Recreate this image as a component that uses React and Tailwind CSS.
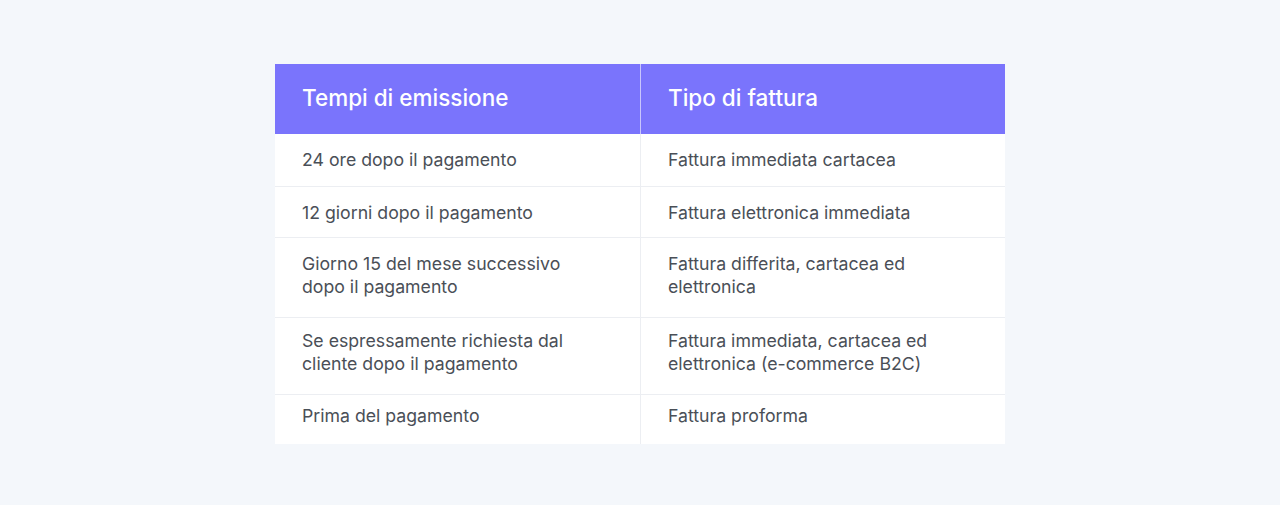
const rows = [
  { when: '24 ore dopo il pagamento', type: 'Fattura immediata cartacea', pad: 'pt-[14px] pb-[15px]' },
  { when: '12 giorni dopo il pagamento', type: 'Fattura elettronica immediata', pad: 'pt-[14px] pb-[13px]' },
  {
    when: 'Giorno 15 del mese successivo dopo il pagamento',
    type: 'Fattura differita, cartacea ed elettronica',
    pad: 'pt-[14px] pb-[19px]',
  },
  {
    when: 'Se espressamente richiesta dal cliente dopo il pagamento',
    type: 'Fattura immediata, cartacea ed elettronica (e-commerce B2C)',
    pad: 'pt-[11px] pb-[19px]',
  },
  { when: 'Prima del pagamento', type: 'Fattura proforma', pad: 'pt-[9px] pb-[17px]' },
];

export default function App() {
  return (
    <div className="w-full h-[505px] bg-[#f4f7fb] pt-16 font-['Inter',sans-serif]">
      <div className="mx-auto w-[730px] bg-white">
        {/* Header */}
        <div className="grid grid-cols-[366px_1fr] bg-[#7a74fc] text-white text-[22.5px] font-medium h-[70px]">
          <div className="flex items-center pl-[27px] pb-[2px] border-r border-[#c9c6fd]">Tempi di emissione</div>
          <div className="flex items-center pl-[27px] pb-[2px]">Tipo di fattura</div>
        </div>

        {/* Rows */}
        {rows.map((row, i) => (
          <div
            key={i}
            className={
              'grid grid-cols-[366px_1fr] text-[17.7px] leading-[23px] text-[#4a4f57] ' +
              (i < rows.length - 1 ? 'border-b border-[#eceef2]' : '')
            }
          >
            <div className={'pl-[27px] pr-[39px] border-r border-[#eceef2] ' + row.pad}>{row.when}</div>
            <div className={'pl-[27px] pr-16 ' + row.pad}>{row.type}</div>
          </div>
        ))}
      </div>
    </div>
  );
}
